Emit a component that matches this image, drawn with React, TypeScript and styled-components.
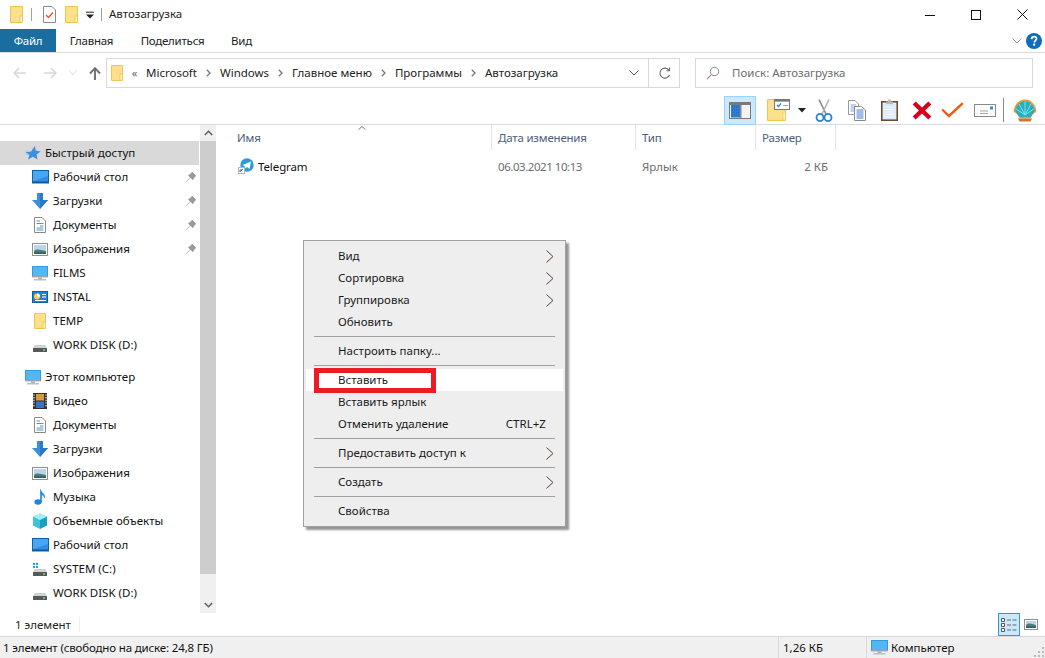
import React from "react";
import styled, { createGlobalStyle } from "styled-components";

const Global = createGlobalStyle`
  html, body { margin: 0; padding: 0; background: #fff; overflow: hidden; }
  * { box-sizing: border-box; }
  #root { width: 1045px; height: 658px; }
`;

const Window = styled.div`
  position: relative; width: 1045px; height: 658px; display: flex; flex-direction: column;
  font-family: "Noto Sans", "Open Sans", sans-serif; font-size: 11.5px; color: #1a1a1a; background: #fff; overflow: hidden;
`;
const TitleBar = styled.div`height: 29px; display: flex; align-items: center; padding-left: 10px; flex: none;`;
const Qat = styled.div<{ $w: number }>`width: ${p => p.$w}px; display: flex; align-items: center; flex: none;`;
const VBar = styled.span<{ $h?: number }>`width: 1px; height: ${p => p.$h ?? 13}px; background: #a0a0a0; flex: none;`;
const TitleText = styled.span`margin-left: 7px; flex: 1; color: #222; padding-bottom: 2px;`;
const WinBtn = styled.div`width: 46px; height: 29px; display: flex; align-items: center; justify-content: center; flex: none;`;

const Tabs = styled.div`height: 24px; display: flex; align-items: stretch; border-bottom: 1px solid #dadada; flex: none; letter-spacing: -.25px;`;
const FileTab = styled.div`width: 56px; background: #1b6d9f; color: #fff; display: flex; align-items: center; justify-content: center;`;
const Tab = styled.div<{ $w: number }>`width: ${p => p.$w}px; display: flex; align-items: center; justify-content: center; color: #222;`;
const TabSpring = styled.div`flex: 1; display: flex; align-items: center; justify-content: flex-end; gap: 4px; padding-right: 3px;`;

const Nav = styled.div`height: 43px; display: flex; align-items: center; padding: 0 12px 3px 0; flex: none;`;
const NavBtn = styled.div<{ $w: number }>`width: ${p => p.$w}px; display: flex; justify-content: center; align-items: center; flex: none;`;
const AddressBox = styled.div`
  width: 574px; height: 30px; border: 1px solid #d9d9d9; display: flex; align-items: center; padding-left: 4px; flex: none;
`;
const Crumbs = styled.div`flex: 1; display: flex; align-items: center; color: #222; padding-bottom: 2px;`;
const Crumb = styled.span``;
const CrumbSep = styled.span`width: 23px; display: flex; justify-content: center; flex: none; padding-top: 2px;`;
const Quote = styled.span`width: 23px; text-align: center; color: #666; font-size: 11px; flex: none;`;
const AddrEnd = styled.div<{ $w: number; $line?: boolean }>`
  width: ${p => p.$w}px; height: 100%; display: flex; align-items: center; justify-content: center; flex: none;
  ${p => p.$line && "border-left: 1px solid #d9d9d9;"}
`;
const SearchBox = styled.div`
  flex: 1; height: 30px; margin-left: 15px; border: 1px solid #d9d9d9; display: flex; align-items: center; padding-left: 10px; gap: 12px; color: #6d6d6d;
`;
const SearchLabel = styled.span`padding-bottom: 2px;`;

const Toolbar = styled.div`height: 29px; display: flex; align-items: center; justify-content: flex-end; border-bottom: 1px solid #dadada; padding-right: 8px; flex: none;`;
const ToolSlot = styled.div<{ $w: number; $active?: boolean; $pl?: number }>`
  width: ${p => p.$w}px; height: 29px; display: flex; align-items: center; justify-content: center; flex: none;
  padding-left: ${p => p.$pl ?? 0}px;
  ${p => p.$active && "background: #cce8ff; border: 1px solid #99d1ff;"}
`;

const Main = styled.div`flex: 1; display: flex; min-height: 0;`;
const Sidebar = styled.div`width: 200px; padding-top: 16px; display: flex; flex-direction: column; flex: none;`;
const NavRow = styled.div<{ $top?: boolean; $sel?: boolean; $gap?: boolean }>`
  height: 24px; display: flex; align-items: center; flex: none; width: 199px;
  padding-left: ${p => (p.$top ? 25 : 32)}px; gap: ${p => (p.$top ? 4 : 5)}px; color: #111;
  ${p => p.$sel && "background: #d9d9d9;"}
  ${p => p.$gap && "margin-top: 8px;"}
`;
const NavLabel = styled.span`padding-bottom: 2px;`;
const IconBox = styled.span<{ $w?: number }>`width: ${p => p.$w ?? 16}px; height: 16px; display: flex; align-items: center; justify-content: center; flex: none;`;
const PinBox = styled.span`margin-left: auto; margin-right: 3px; display: flex;`;

const Scroll = styled.div`width: 16px; background: #f0f0f0; display: flex; flex-direction: column; flex: none;`;
const ScrollBtn = styled.div`height: 16px; display: flex; align-items: center; justify-content: center; flex: none;`;
const Thumb = styled.div`height: 433px; background: #cdcdcd; flex: none;`;
const Track = styled.div`flex: 1;`;

const Content = styled.div`flex: 1; position: relative;`;
const Grid = styled.div<{ $h: number; $mt?: number }>`
  display: grid; grid-template-columns: 276px 144px 120px 80px; height: ${p => p.$h}px; margin-top: ${p => p.$mt ?? 0}px;
`;
const HeadCell = styled.div<{ $pl: number }>`
  border-right: 1px solid #e5e5e5; padding: 0 0 0 ${p => p.$pl}px; display: flex; align-items: center; color: #4c607a; letter-spacing: -.2px;
`;
const SortMark = styled.span`position: absolute; left: 142px; top: 1px; display: flex;`;
const NameCell = styled.div`padding: 0 0 2px 22px; display: flex; align-items: center; gap: 4px; color: #111; letter-spacing: -.1px;`;
const Cell = styled.div<{ $right?: boolean; $tight?: boolean }>`
  padding: 0 ${p => (p.$right ? 8 : 0)}px 2px 6px; display: flex; align-items: center; color: #6d6d6d;
  ${p => p.$right && "justify-content: flex-end;"}
  ${p => p.$tight && "letter-spacing: -.45px;"}
`;

const InfoStrip = styled.div`height: 23px; display: flex; align-items: center; flex: none; padding-left: 15px; color: #222;`;
const InfoText = styled.span`width: 64px;`;
const InfoSep = styled.span`width: 1px; height: 15px; background: #eee;`;
const ViewButtons = styled.div`margin-left: auto; display: flex; align-items: center; padding-right: 3px;`;
const ViewBtn = styled.div<{ $active?: boolean }>`
  width: 22px; height: 23px; display: flex; align-items: center; justify-content: center;
  ${p => p.$active && "background: #cce8ff; border: 1px solid #26a0da;"}
`;

const StatusBar = styled.div`height: 22px; background: #f0f0f0; border-top: 1px solid #d9d9d9; display: flex; align-items: center; flex: none; padding-left: 3px; color: #111; position: relative;`;
const StatusMain = styled.div`width: 775px; flex: none; letter-spacing: -.15px;`;
const StatusCell = styled.div<{ $w: number }>`
  width: ${p => p.$w}px; height: 100%; border-left: 1px solid #d9d9d9; padding-left: 4px; display: flex; align-items: center; gap: 3px; flex: none;
`;
const Grip = styled.span`position: absolute; right: 1px; bottom: 1px; display: flex;`;

const Menu = styled.div`
  position: absolute; left: 303px; top: 240px; width: 263px; height: 287px; background: #eeeeee;
  border: 1px solid #a0a0a0; box-shadow: 3px 3px 2px rgba(90, 90, 90, .65); padding: 4px 2px; color: #1a1a1a;
`;
const MenuRow = styled.div<{ $hot?: boolean }>`
  height: 22px; display: flex; align-items: center; padding: 0 9px 0 32px;
  ${p => p.$hot && "background: #fff;"}
`;
const MenuLabel = styled.span`flex: 1; padding-bottom: 2px;`;
const Shortcut = styled.span`margin-right: 8px; padding-bottom: 2px; letter-spacing: .05px;`;
const MenuSep = styled.div`height: 7px; padding: 3px 8px 3px 8px; display: flex; &::after { content: ""; flex: 1; height: 1px; background: #a0a0a0; }`;
const RedBox = styled.div`position: absolute; left: 10px; top: 127px; width: 122px; height: 25px; border: 5px solid #ed1c24;`;
const ToolVSep = styled.span`width: 1px; height: 24px; background: #8a8a8a; flex: none; margin: 0 9px 0 1px;`;

const S = ({ w = 16, h = 16, children }: { w?: number; h?: number; children: React.ReactNode }) => (
  <svg width={w} height={h} viewBox={`0 0 ${w} ${h}`} style={{ display: "block", flex: "none" }}>{children}</svg>
);

const Folder = ({ w = 13, h = 17 }: { w?: number; h?: number }) => (
  <S w={w} h={h}>
    <path d={`M.5.5H${w - .5}V${h - .5}H.5Z`} fill="#fde08a" stroke="#eec452" />
    <rect x={w - 3} y={h - 7} width={2.5} height={6.5} fill="#fff2c4" stroke="#eec452" strokeWidth=".8" />
  </S>
);
const DocCheck = () => (
  <S w={13} h={17}>
    <path d="M.5.5H9L12.5 4V16.5H.5Z" fill="#fff" stroke="#8a8a8a" />
    <path d="M3 9l2.5 2.5L10 6.5" fill="none" stroke="#e8562a" strokeWidth="1.4" />
  </S>
);
const Caret = ({ w = 8 }: { w?: number }) => (
  <S w={w} h={6}><path d={`M0 1H${w}L${w / 2} 5.5Z`} fill="#222" /></S>
);
const QatCaret = () => (
  <S w={8} h={8}><path d="M0 1.2H8" stroke="#222" strokeWidth="1" /><path d="M0 3.5H8L4 7.5Z" fill="#222" /></S>
);
const Minimize = () => <S w={10} h={10}><path d="M0 5.5H10" stroke="#111" /></S>;
const Maximize = () => <S w={10} h={10}><rect x=".5" y=".5" width="9" height="9" fill="none" stroke="#111" /></S>;
const Close = () => <S w={11} h={11}><path d="M.5.5l10 10M10.5.5l-10 10" stroke="#111" /></S>;
const ChevDown = ({ c = "#8a8a8a", w = 10 }: { c?: string; w?: number }) => (
  <S w={w} h={6}><path d={`M.5.5L${w / 2} 5L${w - .5} .5`} fill="none" stroke={c} strokeWidth="1" /></S>
);
const Help = () => (
  <svg width="16" height="16" viewBox="0 0 16 16" style={{ display: "block" }}>
    <circle cx="8" cy="8" r="8" fill="#0f6cbd" />
    <path d="M5.6 6.1C5.7 4.5 6.7 3.7 8.1 3.7c1.5 0 2.4.9 2.4 2 0 1.9-2.2 1.9-2.2 3.8" fill="none" stroke="#fff" strokeWidth="1.7" />
    <rect x="7.2" y="10.6" width="2" height="2" fill="#fff" />
  </svg>
);
const ArrowLeft = ({ c = "#d9d9d9" }: { c?: string }) => (
  <S w={13} h={12}><path d="M6 1L1.2 6L6 11M1.5 6H13" fill="none" stroke={c} strokeWidth="1.7" /></S>
);
const ArrowRight = ({ c = "#d9d9d9" }: { c?: string }) => (
  <S w={13} h={12}><path d="M7 1L11.8 6L7 11M11.5 6H0" fill="none" stroke={c} strokeWidth="1.7" /></S>
);
const ArrowUp = () => (
  <S w={12} h={13}><path d="M1 6.5L6 1.2L11 6.5M6 1.5V13" fill="none" stroke="#6f6f6f" strokeWidth="1.9" /></S>
);
const SepChevron = () => <S w={5} h={8}><path d="M.8.8L4 4L.8 7.2" fill="none" stroke="#777" strokeWidth="1.3" /></S>;
const Refresh = () => (
  <S w={13} h={13}>
    <path d="M11 3.2A5 5 0 1 0 11.6 8" fill="none" stroke="#6a6a6a" strokeWidth="1.1" />
    <path d="M11.5 .6V3.7H8.4" fill="none" stroke="#6a6a6a" strokeWidth="1.1" />
  </S>
);
const SearchIcon = () => (
  <S w={14} h={14}>
    <circle cx="8.5" cy="5.5" r="4.2" fill="none" stroke="#888" strokeWidth="1" />
    <path d="M5.4 8.6L1 13" stroke="#b08a80" strokeWidth="1.2" />
  </S>
);
const LayoutIcon = () => (
  <S w={22} h={17}>
    <rect x=".5" y=".5" width="21" height="16" fill="#f4f4f4" stroke="#7a7a7a" />
    <rect x="1" y="1" width="20" height="2" fill="#7a7a7a" />
    <rect x="2" y="3" width="9" height="12.5" fill="#2f7fd4" />
    <rect x="11" y="3" width="1.5" height="13" fill="#8a8a8a" />
    <path d="M3 5h7M3 8h7M3 11h7M3 14h7" stroke="#1d63ad" strokeDasharray="1 1" />
  </S>
);
const FolderCard = () => (
  <S w={23} h={22}>
    <path d="M.5 .5H10V4H18.5V21.5H.5Z" fill="#fde08a" stroke="#eec452" />
    <rect x="16" y="13" width="2.5" height="8" fill="#fff2c4" stroke="#eec452" strokeWidth=".7" />
    <rect x="7.5" y=".5" width="15" height="10" fill="#fff" stroke="#777" />
    <rect x="8" y="1" width="14" height="1.6" fill="#777" />
    <path d="M10 6l1.5 1.5L14 4.5" fill="none" stroke="#2f7fd4" strokeWidth="1.2" />
    <path d="M16 6.5h5" stroke="#aaa" />
  </S>
);
const Scissors = () => (
  <S w={18} h={23}>
    <path d="M4 .5L11 15" stroke="#8a8a8a" strokeWidth="1.7" fill="none" />
    <path d="M14 .5L7 15" stroke="#b5b5b5" strokeWidth="1.7" fill="none" />
    <ellipse cx="5" cy="18.5" rx="3.5" ry="3.6" fill="none" stroke="#2a84d2" strokeWidth="1.8" />
    <ellipse cx="13" cy="18.5" rx="3.5" ry="3.6" fill="none" stroke="#2a84d2" strokeWidth="1.8" />
  </S>
);
const CopyIcon = () => (
  <S w={18} h={21}>
    <path d="M.5.5H7L10.5 4V14.5H.5Z" fill="#fff" stroke="#9a9a9a" />
    <path d="M2.5 5H8M2.5 7H8M2.5 9H8M2.5 11H8" stroke="#7ba7de" />
    <path d="M6.5 6.5H13.5L17.5 10V20.5H6.5Z" fill="#fff" stroke="#8a8a8a" />
    <path d="M8.5 10H15.5M8.5 12H15.5M8.5 14H15.5M8.5 16H15.5M8.5 18H15.5" stroke="#3f7fd0" />
  </S>
);
const ClipboardIcon = () => (
  <S w={17} h={22}>
    <rect x=".8" y="2.8" width="15.4" height="18.4" fill="#f2f2f2" stroke="#6a4a32" strokeWidth="1.6" />
    <rect x="2.5" y="5" width="12" height="15" fill="#d8e8f8" />
    <path d="M3.5 8h10M3.5 10.5h10M3.5 13h10M3.5 15.5h10M3.5 18h10" stroke="#f7fbff" />
    <path d="M5 5V2.5H7V.5H10V2.5H12V5Z" fill="#b8b8b8" />
  </S>
);
const RedX = () => (
  <S w={20} h={19}><path d="M2.2 2L17.8 17M17.8 2L2.2 17" stroke="#d6001c" strokeWidth="4.4" /></S>
);
const OrangeCheck = () => (
  <S w={23} h={16}><path d="M1.2 7.5L8 14L21.8 1.2" fill="none" stroke="#f25a0c" strokeWidth="2.4" /></S>
);
const Envelope = () => (
  <S w={22} h={13}>
    <rect x=".5" y=".5" width="21" height="12" fill="#fbfbfb" stroke="#8a8a8a" />
    <rect x="16" y="2.5" width="3" height="3" fill="#2f8fe0" />
    <path d="M6 7h8M6 9.5h8" stroke="#aaa" />
  </S>
);
const Shell = () => (
  <S w={24} h={23}>
    <path d="M12 .5C6 .5 1.5 5 .5 12.5L4.5 15.5L6.5 19.5H17.5L19.5 15.5L23.5 12.5C22.5 5 18 .5 12 .5Z" fill="#f09a3a" />
    <path d="M12 2.2C7.2 2.2 3.2 6 2.2 12L6.5 18H17.5L21.8 12C20.8 6 16.8 2.2 12 2.2Z" fill="#27aebf" />
    <path d="M12 16L6 4.8M12 16L12 2.6M12 16L18 4.8M12 16L3 9.8M12 16L21 9.8" stroke="#7fe0e6" strokeWidth="1" />
    <path d="M5 19.5H19L17.5 22.5H6.5Z" fill="#d0762a" />
  </S>
);
const Star = () => (
  <S><path d="M10 1L10.6 5.6L15.5 6.5L11.5 9.5L12.5 14.5L8 11.8L3 14.5L4.4 10L.5 7.2L6 6.4Z" fill="#3d8fdd" /><path d="M0 6H3M0 9H3" stroke="#9cc8ee" /></S>
);
const Desktop = () => (
  <S w={17} h={14}>
    <rect x=".5" y=".5" width="16" height="12.5" fill="#2e8fe8" stroke="#12609f" />
    <path d="M1 1H16V6L1 11Z" fill="#4aa6f0" />
    <rect x="1" y="11.5" width="15" height="1.5" fill="#0e5a96" />
  </S>
);
const Download = () => (
  <S><path d="M5 0H11V7H16L8 16L0 7H5Z" fill="#3d8fdd" /><path d="M8 0H11V7H16L8 16Z" fill="#2a78c6" /></S>
);
const Document = () => (
  <S w={12} h={16}>
    <path d="M.5.5H8L11.5 4V15.5H.5Z" fill="#fff" stroke="#8a8a8a" />
    <path d="M2.5 4H6M2.5 6.5H9.5M6 9H9.5M2.5 11H9.5M2.5 13H9.5" stroke="#5a93d2" />
  </S>
);
const Picture = ({ w = 16, h = 13 }: { w?: number; h?: number }) => (
  <S w={w} h={h}>
    <rect x=".5" y=".5" width={w - 1} height={h - 1} fill="#fff" stroke="#8f8f8f" />
    <rect x="2" y="2" width={w - 4} height={h - 4} fill="#bcd6ee" />
    <path d={`M2 ${h - 5}C5 ${h - 8} 8 ${h - 6} ${w - 2} ${h - 5}V${h - 2}H2Z`} fill="#4f7d68" />
    <rect x="2" y={h - 3.5} width={w - 4} height="1.5" fill="#2d5a7e" />
  </S>
);
const Monitor = ({ w = 16 }: { w?: number }) => (
  <S w={w} h={15}>
    <rect x=".5" y=".5" width={w - 1} height="10" fill="#52b7f5" stroke="#3a97d8" />
    <rect x="0" y="10" width={w} height="1.4" fill="#9aa4ac" />
    <rect x={w / 2 - 2} y="11.4" width="4" height="1.6" fill="#a9b2b9" />
    <rect x={w / 2 - 6} y="13" width="12" height="1.5" fill="#b9c1c7" />
  </S>
);
const InstalIcon = () => (
  <S w={16} h={12}>
    <rect x=".5" y=".5" width="15" height="11" fill="#1b87d6" stroke="#12609f" />
    <circle cx="5" cy="5.5" r="3" fill="#f2d060" />
    <path d="M5 5.5V2.5A3 3 0 0 1 8 5.5Z" fill="#fff" />
    <path d="M10 3.5H14M10 6H14M3 9.5H14" stroke="#fff" />
  </S>
);
const Drive = ({ win }: { win?: boolean }) => (
  <S w={14} h={14}>
    {win && <path d="M0 1h2v2H0zM3 1h2v2H3zM0 4h2v2H0zM3 4h2v2H3z" fill="#19a4e8" />}
    <path d="M2 7H12L14 10H0Z" fill="#cfd3d6" />
    <rect x="0" y="10" width="14" height="4" rx=".5" fill="#55595c" />
    <rect x="10" y="11.3" width="2" height="1.5" fill="#5fe06a" />
  </S>
);
const Film = () => (
  <S w={14} h={16}>
    <rect width="14" height="16" fill="#333" />
    <rect x="3" y="1" width="8" height="6.5" fill="#d89a3a" />
    <rect x="3" y="8.5" width="8" height="6.5" fill="#3a72c8" />
    <path d="M1 1.5v13M13 1.5v13" stroke="#eee" strokeDasharray="1.3 1.3" strokeWidth="1.2" />
  </S>
);
const Note = () => (
  <S w={12} h={16}>
    <ellipse cx="4" cy="13" rx="3.6" ry="2.8" fill="#1e83e0" />
    <path d="M6.5 13V.5C7 4 11.5 4.5 10.5 9C10 6.5 8.5 6 7.6 5.6V13Z" fill="#1e83e0" stroke="#1e83e0" strokeWidth=".6" />
  </S>
);
const Cube = () => (
  <S>
    <path d="M8 0L15 3.5L8 7L1 3.5Z" fill="#9ef0f4" />
    <path d="M1 3.5L8 7V16L1 12.5Z" fill="#3cc4d8" />
    <path d="M15 3.5L8 7V16L15 12.5Z" fill="#15a0c4" />
  </S>
);
const Pin = () => (
  <S w={10} h={10}><path d="M6 0L10 4L8.6 4.6L6.8 7.8L2.4 3.4L5.4 1.4ZM4 5.8L.4 9.6" fill="#9a9a9a" stroke="#9a9a9a" strokeWidth=".7" /></S>
);
const ScrollUp = () => <S w={9} h={6}><path d="M.8 5L4.5 1.3L8.2 5" fill="none" stroke="#606060" strokeWidth="1.6" /></S>;
const ScrollDown = () => <S w={9} h={6}><path d="M.8 1L4.5 4.7L8.2 1" fill="none" stroke="#606060" strokeWidth="1.6" /></S>;
const SortUp = () => <S w={8} h={4}><path d="M.5 3.7L4 .5L7.5 3.7" fill="none" stroke="#7a7a7a" /></S>;
const Telegram = () => (
  <S>
    <circle cx="9" cy="7" r="6.7" fill="#2d9bd8" />
    <path d="M4.5 7L13 3.5L11.5 11L9 9L7.5 10.5L7 8.5Z" fill="#fff" />
    <rect x=".5" y="9.5" width="6" height="6" fill="#fff" stroke="#b5b5b5" />
    <path d="M2 14L2 12H4M2.3 13.7L5 11" fill="none" stroke="#2b74c4" strokeWidth="1" />
  </S>
);
const DetailsView = () => (
  <S w={16} h={14}>
    <path d="M.5.5h3v3h-3zM.5 5.5h3v3h-3zM.5 10.5h3v3h-3z" fill="#fff" stroke="#555" />
    <path d="M6 2h4M11.5 2h4M6 7h4M11.5 7h4M6 12h4M11.5 12h4" stroke="#666" />
  </S>
);
const MenuArrow = () => <S w={8} h={13}><path d="M.6.6L7 6.5L.6 12.4" fill="none" stroke="#444" strokeWidth="1" /><path d="M.2 12.4L6.5 6.5" stroke="#c76a3a" strokeWidth=".5" /></S>;
const GripDots = () => (
  <S w={11} h={11}><path d="M9 1h2v2H9zM5 5h2v2H5zM9 5h2v2H9zM1 9h2v2H1zM5 9h2v2H5zM9 9h2v2H9z" fill="#b9b9b9" /></S>
);

const quick: [React.ReactNode, string, boolean][] = [
  [<Desktop />, "Рабочий стол", true],
  [<Download />, "Загрузки", true],
  [<Document />, "Документы", true],
  [<Picture />, "Изображения", true],
  [<Monitor />, "FILMS", false],
  [<InstalIcon />, "INSTAL", false],
  [<Folder w={12} h={16} />, "TEMP", false],
  [<Drive />, "WORK DISK (D:)", false],
];
const computer: [React.ReactNode, string][] = [
  [<Film />, "Видео"],
  [<Document />, "Документы"],
  [<Download />, "Загрузки"],
  [<Picture />, "Изображения"],
  [<Note />, "Музыка"],
  [<Cube />, "Объемные объекты"],
  [<Desktop />, "Рабочий стол"],
  [<Drive win />, "SYSTEM (C:)"],
  [<Drive />, "WORK DISK (D:)"],
];
const crumbs = ["Microsoft", "Windows", "Главное меню", "Программы", "Автозагрузка"];

export default function App() {
  return (
    <Window>
      <Global />
      <TitleBar>
        <Qat $w={21}><Folder /></Qat>
        <Qat $w={12}><VBar /></Qat>
        <Qat $w={22}><DocCheck /></Qat>
        <Qat $w={21}><Folder /></Qat>
        <Qat $w={15}><QatCaret /></Qat>
        <VBar />
        <TitleText>Автозагрузка</TitleText>
        <WinBtn><Minimize /></WinBtn>
        <WinBtn><Maximize /></WinBtn>
        <WinBtn><Close /></WinBtn>
      </TitleBar>
      <Tabs>
        <FileTab>Файл</FileTab>
        <Tab $w={71}>Главная</Tab>
        <Tab $w={91}>Поделиться</Tab>
        <Tab $w={47}>Вид</Tab>
        <TabSpring><ChevDown c="#a0a0a0" /><Help /></TabSpring>
      </Tabs>
      <Nav>
        <NavBtn $w={38}><ArrowLeft /></NavBtn>
        <NavBtn $w={24}><ArrowRight /></NavBtn>
        <NavBtn $w={22}><ChevDown c="#d9d9d9" w={8} /></NavBtn>
        <NavBtn $w={22}><ArrowUp /></NavBtn>
        <AddressBox>
          <Folder w={12} h={16} />
          <Crumbs>
            <Quote>«</Quote>
            {crumbs.map((c, i) => (
              <React.Fragment key={c}>
                {i > 0 && <CrumbSep><SepChevron /></CrumbSep>}
                <Crumb>{c}</Crumb>
              </React.Fragment>
            ))}
          </Crumbs>
          <AddrEnd $w={29}><ChevDown c="#555" /></AddrEnd>
          <AddrEnd $w={31} $line><Refresh /></AddrEnd>
        </AddressBox>
        <SearchBox><SearchIcon /><SearchLabel>Поиск: Автозагрузка</SearchLabel></SearchBox>
      </Nav>
      <Toolbar>
        <ToolSlot $w={32} $active><LayoutIcon /></ToolSlot>
        <ToolSlot $w={42} $pl={3}><FolderCard /></ToolSlot>
        <ToolSlot $w={8}><Caret /></ToolSlot>
        <ToolSlot $w={35}><Scissors /></ToolSlot>
        <ToolSlot $w={32}><CopyIcon /></ToolSlot>
        <ToolSlot $w={33}><ClipboardIcon /></ToolSlot>
        <ToolSlot $w={31}><RedX /></ToolSlot>
        <ToolSlot $w={31}><OrangeCheck /></ToolSlot>
        <ToolSlot $w={34}><Envelope /></ToolSlot>
        <ToolVSep />
        <ToolSlot $w={24}><Shell /></ToolSlot>
      </Toolbar>
      <Main>
        <Sidebar>
          <NavRow $top $sel><IconBox><Star /></IconBox><NavLabel>Быстрый доступ</NavLabel></NavRow>
          {quick.map(([icon, label, pinned]) => (
            <NavRow key={label}>
              <IconBox>{icon}</IconBox><NavLabel>{label}</NavLabel>
              {pinned && <PinBox><Pin /></PinBox>}
            </NavRow>
          ))}
          <NavRow $top $gap><IconBox><Monitor /></IconBox><NavLabel>Этот компьютер</NavLabel></NavRow>
          {computer.map(([icon, label]) => (
            <NavRow key={label + "2"}><IconBox>{icon}</IconBox><NavLabel>{label}</NavLabel></NavRow>
          ))}
        </Sidebar>
        <Scroll>
          <ScrollBtn><ScrollUp /></ScrollBtn>
          <Thumb />
          <Track />
          <ScrollBtn><ScrollDown /></ScrollBtn>
        </Scroll>
        <Content>
          <SortMark><SortUp /></SortMark>
          <Grid $h={25}>
            <HeadCell $pl={21}>Имя</HeadCell>
            <HeadCell $pl={6}>Дата изменения</HeadCell>
            <HeadCell $pl={6}>Тип</HeadCell>
            <HeadCell $pl={6}>Размер</HeadCell>
          </Grid>
          <Grid $h={22} $mt={6}>
            <NameCell><Telegram />Telegram</NameCell>
            <Cell $tight>06.03.2021 10:13</Cell>
            <Cell>Ярлык</Cell>
            <Cell $right>2 КБ</Cell>
          </Grid>
        </Content>
      </Main>
      <InfoStrip>
        <InfoText>1 элемент</InfoText>
        <InfoSep />
        <ViewButtons>
          <ViewBtn $active><DetailsView /></ViewBtn>
          <ViewBtn><Picture w={14} h={11} /></ViewBtn>
        </ViewButtons>
      </InfoStrip>
      <StatusBar>
        <StatusMain>1 элемент (свободно на диске: 24,8 ГБ)</StatusMain>
        <StatusCell $w={88}>1,26 КБ</StatusCell>
        <StatusCell $w={120}><Monitor w={17} />Компьютер</StatusCell>
        <Grip><GripDots /></Grip>
      </StatusBar>
      <Menu>
        <MenuRow><MenuLabel>Вид</MenuLabel><MenuArrow /></MenuRow>
        <MenuRow><MenuLabel>Сортировка</MenuLabel><MenuArrow /></MenuRow>
        <MenuRow><MenuLabel>Группировка</MenuLabel><MenuArrow /></MenuRow>
        <MenuRow><MenuLabel>Обновить</MenuLabel></MenuRow>
        <MenuSep />
        <MenuRow><MenuLabel>Настроить папку...</MenuLabel></MenuRow>
        <MenuSep />
        <MenuRow $hot><MenuLabel>Вставить</MenuLabel></MenuRow>
        <MenuRow><MenuLabel>Вставить ярлык</MenuLabel></MenuRow>
        <MenuRow><MenuLabel>Отменить удаление</MenuLabel><Shortcut>CTRL+Z</Shortcut></MenuRow>
        <MenuSep />
        <MenuRow><MenuLabel>Предоставить доступ к</MenuLabel><MenuArrow /></MenuRow>
        <MenuSep />
        <MenuRow><MenuLabel>Создать</MenuLabel><MenuArrow /></MenuRow>
        <MenuSep />
        <MenuRow><MenuLabel>Свойства</MenuLabel></MenuRow>
        <RedBox />
      </Menu>
    </Window>
  );
}
